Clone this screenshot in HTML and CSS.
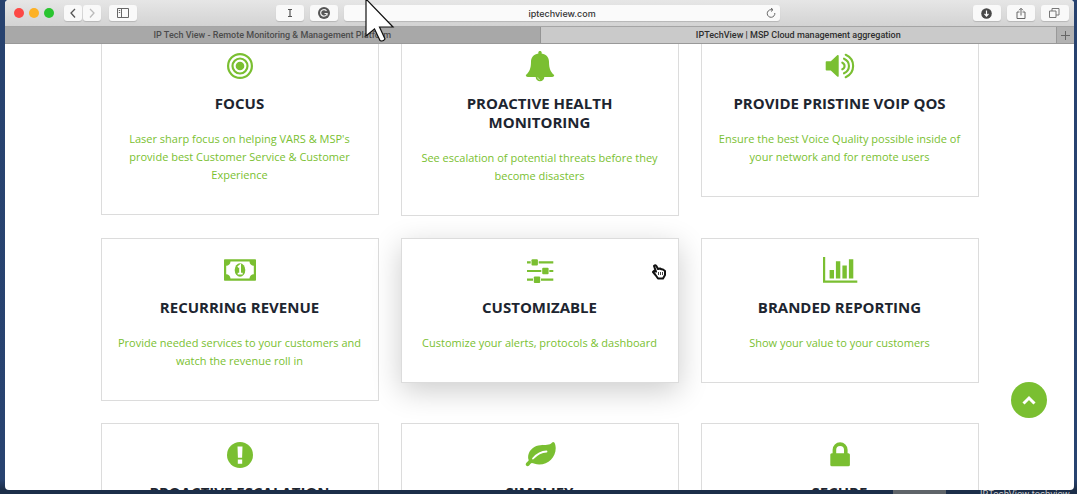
FILE: index.html
```html
<!DOCTYPE html>
<html lang="en">
<head>
  <meta charset="UTF-8">
  <title>IPTechView | MSP Cloud management aggregation</title>
  <meta name="viewport" content="width=device-width, initial-scale=1.0">
  <link rel="stylesheet" href="styles.css">
</head>
<body>
  <div class="window">
    <header class="toolbar">
      <div class="lights">
        <span class="light red"></span>
        <span class="light yellow"></span>
        <span class="light green"></span>
      </div>
      <div class="nav">
        <button class="tool small" aria-label="Back">
          <svg width="8" height="12" viewBox="0 0 8 12"><path d="M6 2L2 6l4 4.500" fill="none" stroke="#555" stroke-width="1.300"/></svg>
        </button>
        <button class="tool small" aria-label="Forward">
          <svg width="8" height="12" viewBox="0 0 8 12"><path d="M2 2l4 4-4 4.500" fill="none" stroke="#bbb" stroke-width="1.300"/></svg>
        </button>
      </div>
      <button class="tool" aria-label="Sidebar">
        <svg width="12" height="10" viewBox="0 0 12 10"><path d="M.5.5h11v9H.5zM4.500.5v9M1.800 2.500h1.400M1.800 4.500h1.400" fill="none" stroke="#666"/></svg>
      </button>
      <div class="space-left"></div>
      <button class="tool" aria-label="Instapaper">
        <svg width="6" height="10" viewBox="0 0 6 10"><path d="M1 1.500h4M1 8.500h4M3 1.500v7" fill="none" stroke="#555" stroke-width="1.200"/></svg>
      </button>
      <button class="tool" aria-label="Grammarly">
        <svg width="12" height="12" viewBox="0 0 12 12"><circle cx="6" cy="6" r="6" fill="#555"/><path d="M8.500 3.800A3.300 3.300 0 1 0 9.200 6.500H6.500M9 6v2.500" fill="none" stroke="#eee" stroke-width="1.200"/></svg>
      </button>
      <div class="address">
        <input type="text" value="iptechview.com" aria-label="Address">
        <button class="reload" aria-label="Reload">
          <svg width="10" height="10" viewBox="0 0 10 10"><path d="M8.800 5A3.800 3.800 0 1 1 5 1.700h1.500M5 0l2 1.700L5 3.500" fill="none" stroke="#666"/></svg>
        </button>
      </div>
      <div class="space-right"></div>
      <button class="tool" aria-label="Downloads">
        <svg width="11" height="11" viewBox="0 0 11 11"><circle cx="5.500" cy="5.500" r="5.300" fill="#484848"/><path d="M5.500 2.500v5M3.500 5.800l2 2.200 2-2.200" fill="none" stroke="#fff" stroke-width="1.200"/></svg>
      </button>
      <button class="tool" aria-label="Share">
        <svg width="10" height="13" viewBox="0 0 10 13"><path d="M3.500 5H1v6.500h8V5H6.500M5 8.500V1.500M3 3.300l2-2 2 2" fill="none" stroke="#666"/></svg>
      </button>
      <button class="tool" aria-label="Show all tabs">
        <svg width="11" height="10" viewBox="0 0 11 10"><path d="M.5 3h6.500v6.500H.5zM3 3V.5h7V7H7" fill="none" stroke="#777"/></svg>
      </button>
    </header>

    <nav class="tabs">
      <a class="tab" href="#">IP Tech View - Remote Monitoring &amp; Management Platform</a>
      <a class="tab current" href="#">IPTechView | MSP Cloud management aggregation</a>
      <button class="new-tab" aria-label="New tab">
        <svg width="9" height="9" viewBox="0 0 9 9"><path d="M4.500 0v9M0 4.500h9" stroke="#666"/></svg>
      </button>
    </nav>

    <main class="page">
      <div class="features">
        <article class="card">
          <svg class="icon" viewBox="0 0 36 36"><g fill="none" stroke="#7abf31" stroke-width="2.200"><circle cx="18" cy="18" r="11.900"/><circle cx="18" cy="18" r="7.500"/></g><circle cx="18" cy="18" r="4.300"/></svg>
          <h3>Focus</h3>
          <p>Laser sharp focus on helping VARS &amp; MSP's provide best Customer Service &amp; Customer Experience</p>
        </article>
        <article class="card">
          <svg class="icon" viewBox="0 0 36 36"><path d="M18 3c1 0 1.700.7 1.700 1.500l-.1.900c4.700.8 7.400 4 7.400 8.300 0 6.500 1.500 10.300 5.200 13.300 0 1.300-.9 2-2 2h-7.900a4.300 4.300 0 0 1-8.600 0H5.800c-1.100 0-2-.7-2-2C7.500 24 9 20.200 9 13.700c0-4.300 2.700-7.500 7.400-8.300l-.1-.9C16.300 3.700 17 3 18 3z"/><path d="M15.700 29.200a2.400 2.400 0 0 0 2.300 2.400" fill="none" stroke="#fff" stroke-width=".5"/></svg>
          <h3>Proactive Health Monitoring</h3>
          <p>See escalation of potential threats before they become disasters</p>
        </article>
        <article class="card">
          <svg class="icon" viewBox="0 0 36 36"><path d="M4.500 13.300h4.300l6.400-6c.8-.6 1.500-.3 1.500.6v20c0 .9-.7 1.200-1.500.6l-6.400-6H4.500c-.5 0-.8-.3-.8-.8v-7.600c0-.5.300-.8.800-.8z"/><g fill="none" stroke="#7abf31" stroke-width="2.100" stroke-linecap="round"><path d="M20.300 14.700c3 1.200 3 5.400 0 6.600"/><path d="M22 10.700c6.600 3 6.600 11.600 0 14.600"/><path d="M23.700 6.800c9.900 4.500 9.900 17.900 0 22.400"/></g></svg>
          <h3>Provide Pristine VoIP QoS</h3>
          <p>Ensure the best Voice Quality possible inside of your network and for remote users</p>
        </article>
        <article class="card">
          <svg class="icon" viewBox="0 0 36 36"><path fill-rule="evenodd" d="M3 7.300h30c.6 0 1 .4 1 1v19.400c0 .6-.4 1-1 1H3c-.6 0-1-.4-1-1V8.300c0-.6.4-1 1-1zM8.500 9.500a4.300 4.300 0 0 1-4.300 4.300v8.400a4.300 4.300 0 0 1 4.300 4.300h19a4.300 4.300 0 0 1 4.300-4.300v-8.400a4.300 4.300 0 0 1-4.300-4.300z"/><ellipse cx="18" cy="18" rx="5.300" ry="6.800"/><path d="M15.900 15.200l2.200-1.800v8.200M15.700 21.600h5" fill="none" stroke="#fff" stroke-width="1.800"/></svg>
          <h3>Recurring Revenue</h3>
          <p>Provide needed services to your customers and watch the revenue roll in</p>
        </article>
        <article class="card raised">
          <svg class="icon" viewBox="0 0 36 36"><path d="M5 9.300h3.700v2.200H5zM16.700 9.300h14.600v2.200H16.700zM5 17.900h14.300v2.200H5zM27.300 17.900h4v2.200h-4zM5 26.600h6v2.200H5zM19 26.600h12.300v2.200H19z"/><rect x="9.500" y="7.200" width="6.400" height="6.400" rx="1"/><rect x="20.200" y="15.800" width="6.400" height="6.400" rx="1"/><rect x="11.800" y="24.500" width="6.400" height="6.400" rx="1"/></svg>
          <h3>Customizable</h3>
          <p>Customize your alerts, protocols &amp; dashboard</p>
        </article>
        <article class="card">
          <svg class="icon" viewBox="0 0 36 36"><path d="M1 5h2.200v23.600h32.100v2.200H1zM7.600 18H12v8.600H7.600zM13.900 9.300h4.400v17.300h-4.400zM20.400 13.600h4.400v13h-4.400zM26.900 7.200h4.400v19.400h-4.400z"/></svg>
          <h3>Branded Reporting</h3>
          <p>Show your value to your customers</p>
        </article>
        <article class="card">
          <svg class="icon" viewBox="0 0 36 36"><circle cx="18" cy="18" r="13"/><path d="M15.500 9.500h5l-.4 11.200h-4.200zM15.800 22.500h4.400v4.200h-4.400z" fill="#fff"/></svg>
          <h3>Proactive Escalation</h3>
        </article>
        <article class="card">
          <svg class="icon" viewBox="0 0 36 36"><path d="M31.200 5c1.500 0 2.500 3 2.500 6.300 0 9-7.200 16.200-16.500 16.200-3.300 0-6-1.500-7.400-1.500-1.300 0-2.300 3.200-4.200 3.200-1.200 0-1.900-1.200-1.900-2 0-1.900 3-2.800 3-3.900 0-.5-.6-1.200-.6-3 0-6 4.500-10.700 10.300-11.900 5.200-1 9.700.2 12.700-2 .8-.6 1.300-1.400 2.100-1.400z"/><path d="M11 21.500c4.200-4.600 8-6.800 13.500-7" fill="none" stroke="#fff" stroke-width="1.800" stroke-linecap="round"/></svg>
          <h3>Simplify</h3>
        </article>
        <article class="card">
          <svg class="icon" viewBox="0 0 36 36"><rect x="8.300" y="16.300" width="19.600" height="13" rx="1.500"/><path d="M12.400 17v-4.200a5.700 5.700 0 0 1 11.400 0V17" fill="none" stroke="#7abf31" stroke-width="3.600"/></svg>
          <h3>Secure</h3>
        </article>
      </div>
      <a class="to-top" href="#" aria-label="Back to top">
        <svg width="14" height="10" viewBox="0 0 14 10"><path d="M1.500 8.500L7 3l5.500 5.500" fill="none" stroke="#fff" stroke-width="3"/></svg>
      </a>
    </main>
  </div>

  <div class="desktop">
    <span class="thumb"></span>
    <span class="file">IPTechView techview</span>
  </div>

  <svg class="pointer" width="30" height="44" viewBox="0 0 30 44"><path d="M1-1v37l8.500-7 5.500 11.500q3 1.500 5-1.500L14.500 27H28z" fill="#fff" stroke="#111" stroke-width="1.200"/></svg>
  <svg class="hand" width="15" height="16" viewBox="0 0 15 16"><path d="M2 2q1.500-1.500 2.500.2L6 5l2-.5 1.500.8 1.500.2 2 1.500v4l-2 3.500H6L3.500 11 1 8l1-1.200 2 .8z" fill="#fff" stroke="#111" stroke-width="2" stroke-linejoin="round"/><path d="M6.500 8v3M8.500 8v3M10.500 8v3" stroke="#111" stroke-width=".8"/></svg>
</body>
</html>
```
FILE: styles.css
```css
* {
  box-sizing: border-box;
}
body {
  margin: 0;
  height: 100vh;
  display: flex;
  flex-direction: column;
  overflow: hidden;
  position: relative;
  background: linear-gradient(#27426f, #284370 97%, #1c2e49 99%);
  font-family: "Open Sans", sans-serif;
}
button {
  padding: 0;
  border: none;
  font: inherit;
}
.window {
  flex: 1;
  min-height: 0;
  margin: 0 3px 0 5px;
  display: flex;
  flex-direction: column;
  border-radius: 4px;
  overflow: hidden;
  background: #fff;
}

/* browser chrome */
.toolbar {
  flex: none;
  height: 27px;
  display: flex;
  align-items: center;
  gap: 6px;
  padding: 0 5px 0 9px;
  background: linear-gradient(#e6e6e6, #d3d3d3);
  border-bottom: 1px solid #a5a5a5;
}
.lights {
  display: flex;
  gap: 5px;
  margin-right: 4px;
}
.light {
  width: 10px;
  height: 10px;
  border-radius: 50%;
}
.red {
  background: #fc4845;
}
.yellow {
  background: #fdb125;
}
.green {
  background: #29c42f;
}
.nav {
  display: flex;
  gap: 1px;
  margin-right: 2px;
}
.tool {
  flex: none;
  width: 28px;
  height: 16px;
  display: flex;
  align-items: center;
  justify-content: center;
  background: #f9f9f9;
  border-radius: 3px;
  box-shadow: 0 1px 1px rgba(0,0,0,0.15);
}
.small {
  width: 18px;
}
.space-left {
  flex: 127;
}
.space-right {
  flex: 181;
}
.address {
  flex: 437;
  height: 16px;
  display: flex;
  align-items: center;
  background: #fafafa;
  border-radius: 3px;
  box-shadow: 0 1px 1px rgba(0,0,0,0.15);
}
.address input {
  flex: 1;
  min-width: 0;
  padding: 0 0 0 18px;
  border: none;
  background: none;
  text-align: center;
  font: 500 9px Inter, sans-serif;
  color: #333;
}
.reload {
  width: 18px;
  height: 16px;
  display: flex;
  align-items: center;
  justify-content: center;
  background: none;
}
.tabs {
  flex: none;
  height: 17px;
  display: grid;
  grid-template-columns: 50% 1fr 18px;
  border-bottom: 1px solid #999;
  background: #a8a8a8;
  font: 500 9px/17px Roboto, sans-serif;
  text-align: center;
}
.tab {
  overflow: hidden;
  white-space: nowrap;
  color: #4c4c4c;
  text-decoration: none;
}
.current {
  background: #cacaca;
  border-left: 1px solid #949494;
  color: #2e2e2e;
}
.new-tab {
  display: flex;
  align-items: center;
  justify-content: center;
  background: #b2b2b2;
  border-left: 1px solid #999;
}

/* page */
.page {
  flex: 1;
  min-height: 0;
  position: relative;
  overflow: hidden;
}
.features {
  max-width: 878px;
  margin: -10px auto 0;
  display: grid;
  grid-template-columns: repeat(3, 1fr);
  gap: 22px;
  align-items: start;
}
.card {
  padding: 13px 14px 30px;
  border: 1px solid #dcdcdc;
  background: #fff;
  text-align: center;
}
.raised {
  box-shadow: 0 8px 28px rgba(0,0,0,0.2);
}
.icon {
  display: block;
  width: 36px;
  height: 36px;
  margin: 0 auto 10px;
  fill: #7abf31;
}
.card h3 {
  margin: 0 0 17px;
  font-size: 15px;
  line-height: 19px;
  font-weight: 700;
  text-transform: uppercase;
  color: #1d2530;
}
.card p {
  margin: 0;
  font-size: 11px;
  line-height: 18px;
  color: #7abf31;
}
.to-top {
  position: absolute;
  right: 27px;
  bottom: 72px;
  width: 36px;
  height: 36px;
  display: flex;
  align-items: center;
  justify-content: center;
  border-radius: 50%;
  background: #7abf31;
}

/* desktop behind the window */
.desktop {
  flex: none;
  height: 4px;
  display: flex;
  justify-content: flex-end;
  gap: 34px;
  padding-right: 7px;
  overflow: hidden;
  background: #1c2e49;
}
.thumb {
  width: 53px;
  height: 4px;
  background: #5f6469;
}
.file {
  font: 9px/7px Inter, sans-serif;
  color: #ccc;
}
.pointer {
  position: absolute;
  left: 365px;
  top: 0;
}
.hand {
  position: absolute;
  left: 652px;
  top: 264px;
}
```
